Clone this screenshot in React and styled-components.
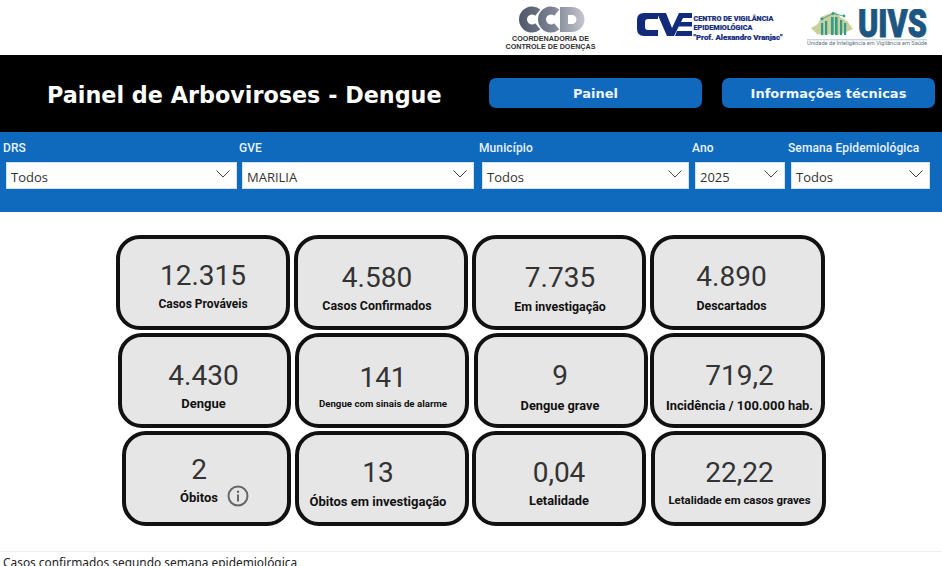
import React from 'react';
import styled, { createGlobalStyle } from 'styled-components';

const Global = createGlobalStyle`
  html, body { margin: 0; padding: 0; background: #fff; }
  body { width: 942px; height: 566px; overflow: hidden; font-family: Roboto, "Liberation Sans", sans-serif; }
`;

const Page = styled.div`
  width: 942px;
  height: 566px;
  overflow: hidden;
  display: flex;
  flex-direction: column;
  background: #fff;
`;

const LogoBar = styled.div`
  height: 55px;
  flex: none;
  display: flex;
  align-items: flex-start;
  padding-left: 505px;
  box-sizing: border-box;
`;

const LogoSvg = styled.svg`
  flex: none;
  display: block;
  margin-left: ${p => p.$ml || 0}px;
  margin-top: ${p => p.$mt || 0}px;
`;

const Header = styled.header`
  height: 77px;
  flex: none;
  background: #000;
  display: flex;
  align-items: center;
  box-sizing: border-box;
  padding-left: 47px;
`;

const Title = styled.h1`
  margin: 2px 0 0;
  width: 442px;
  flex: none;
  color: #fff;
  font: 700 22.3px "DejaVu Sans", Verdana, sans-serif;
  white-space: nowrap;
`;

const NavButton = styled.button`
  width: 213px;
  height: 30px;
  flex: none;
  margin: -1px ${p => p.$mr || 0}px 0 0;
  padding: 0;
  border: none;
  border-radius: 7px;
  background: #1069bd;
  color: #eef6ff;
  font: 700 13px "DejaVu Sans", Verdana, sans-serif;
`;

const FilterBar = styled.section`
  height: 80px;
  flex: none;
  background: #0f69bd;
  display: flex;
  box-sizing: border-box;
  padding: 9px 0 0 3px;
`;

const FilterGroup = styled.div`
  width: ${p => p.$w}px;
  flex: none;
`;

const FilterLabel = styled.div`
  height: 15px;
  color: #e8f3fd;
  font: 500 12px/15px Roboto, sans-serif;
  letter-spacing: 0.1px;
  white-space: nowrap;
`;

const Select = styled.div`
  box-sizing: border-box;
  width: ${p => p.$w}px;
  height: 27px;
  margin: 6px 0 0 3px;
  padding: 0 5px 0 4px;
  background: #fff;
  border: 1px solid #cfe3f5;
  display: flex;
  align-items: center;
  justify-content: space-between;
  color: #333;
  font: 400 13px "Open Sans", sans-serif;
`;

const SelectText = styled.span`
  padding-top: 2px;
`;

const Chevron = styled.svg`
  flex: none;
  margin: -3px 1px 0 0;
`;

const Board = styled.main`
  flex: none;
  height: 339px;
  box-sizing: border-box;
  padding-top: 23px;
  display: flex;
  flex-direction: column;
  gap: 3px;
`;

const Row = styled.div`
  display: flex;
  padding-left: ${p => p.$pl}px;
`;

const Card = styled.article`
  position: relative;
  box-sizing: border-box;
  flex: none;
  width: ${p => p.$w}px;
  height: 95px;
  margin-left: ${p => p.$ml}px;
  border: 4px solid #111;
  border-radius: 24px;
  background: #e6e6e6;
  padding: 0 ${p => Math.max(0, -2 * (p.$dx || 0))}px 0 ${p => Math.max(0, 2 * (p.$dx || 0))}px;
  display: flex;
  flex-direction: column;
  align-items: center;
`;

const Value = styled.div`
  margin-top: ${p => p.$top}px;
  height: 32px;
  font: 400 28px/32px Roboto, sans-serif;
  color: #333;
`;

const Label = styled.div`
  margin-top: ${p => p.$gap}px;
  height: 16px;
  font: 700 ${p => p.$fs}px/16px Roboto, sans-serif;
  color: #111;
  white-space: nowrap;
`;

const InfoBadge = styled.svg`
  position: absolute;
  left: 101px;
  top: 50px;
`;

const Footer = styled.footer`
  flex: 1;
  border-top: 1px solid #f1f1f1;
  padding: 2px 0 0 3px;
  font: 400 11.9px/16px "Noto Sans", sans-serif;
  color: #222;
  white-space: nowrap;
`;

const filters = [
  { label: 'DRS', value: 'Todos', w: 236, sw: 231 },
  { label: 'GVE', value: 'MARILIA', w: 240, sw: 232 },
  { label: 'Município', value: 'Todos', w: 213, sw: 207 },
  { label: 'Ano', value: '2025', w: 96, sw: 90 },
  { label: 'Semana Epidemiológica', value: 'Todos', w: 145, sw: 139 },
];

const rows = [
  { pl: 116, cards: [
    { v: '12.315', l: 'Casos Prováveis', fs: 12, w: 174, ml: 0, top: 21, gap: 4, dx: 0 },
    { v: '4.580', l: 'Casos Confirmados', fs: 12.4, w: 174, ml: 4, top: 23, gap: 4, dx: -4 },
    { v: '7.735', l: 'Em investigação', fs: 12.4, w: 174, ml: 4, top: 23, gap: 5, dx: 1 },
    { v: '4.890', l: 'Descartados', fs: 12.4, w: 175, ml: 4, top: 22, gap: 5, dx: -6 },
  ]},
  { pl: 118, cards: [
    { v: '4.430', l: 'Dengue', fs: 13, w: 173, ml: 0, top: 23, gap: 4, dx: -1 },
    { v: '141', l: 'Dengue com sinais de alarme', fs: 9.7, w: 174, ml: 4, top: 25, gap: 2, dx: 1 },
    { v: '9', l: 'Dengue grave', fs: 12.8, w: 174, ml: 5, top: 23, gap: 6, dx: -1 },
    { v: '719,2', l: 'Incidência / 100.000 hab.', fs: 12.9, w: 175, ml: 2, top: 23, gap: 6, dx: 2 },
  ]},
  { pl: 122, cards: [
    { v: '2', l: 'Óbitos', fs: 13, w: 169, ml: 0, top: 19, gap: 4, dx: -7.5, info: true },
    { v: '13', l: 'Óbitos em investigação', fs: 13, w: 174, ml: 4, top: 22, gap: 5, dx: -4 },
    { v: '0,04', l: 'Letalidade', fs: 12.8, w: 174, ml: 3, top: 22, gap: 4, dx: 0 },
    { v: '22,22', l: 'Letalidade em casos graves', fs: 11.4, w: 175, ml: 5, top: 22, gap: 3, dx: 1 },
  ]},
];

const CcdLogo = () => (
  <LogoSvg width="91" height="50" viewBox="0 0 91 50" $mt={3}>
    <defs>
      <linearGradient id="ccdG" gradientUnits="userSpaceOnUse" x1="14" y1="0" x2="80" y2="0">
        <stop offset="0" stopColor="#4f5768" />
        <stop offset="0.5" stopColor="#7b8192" />
        <stop offset="1" stopColor="#c6c8d0" />
      </linearGradient>
    </defs>
    <g fill="none" stroke="url(#ccdG)" strokeWidth="8">
      <path d="M32.8 9.6 A9 9 0 1 0 32.8 23.4" />
      <path d="M51.8 9.6 A9 9 0 1 0 51.8 23.4" />
      <path d="M59 8 H67 A8.5 8.5 0 0 1 67 25 H59 Z" />
    </g>
    <g fill="#303033" fontFamily="'Liberation Sans', sans-serif" fontWeight="700" fontSize="7.6" textAnchor="middle">
      <text x="45.5" y="37.5" textLength="77" lengthAdjust="spacingAndGlyphs">COORDENADORIA DE</text>
      <text x="45.5" y="45.5" textLength="90" lengthAdjust="spacingAndGlyphs">CONTROLE DE DOENÇAS</text>
    </g>
  </LogoSvg>
);

const CveLogo = () => (
  <LogoSvg width="148" height="32" viewBox="0 0 148 32" $ml={40} $mt={11}>
    <path d="M8 2 H22 V8 H12 Q9 8 9 11 V16 Q9 19 12 19 H22 V25 H8 Q1 25 1 18 V9 Q1 2 8 2 Z" fill="#122a7a" />
    <path d="M21 2 H30 L36 17 L43 2 H56 V7 H47 L38 25 H31 Z" fill="#122a7a" />
    <path d="M44.5 11 H56 V15.5 H42.5 Z M41 20 H56 V25 H39 Z" fill="#122a7a" />
    <g fill="#1a2f7e" stroke="#1a2f7e" strokeWidth="0.2" fontFamily="Roboto, sans-serif" fontWeight="900" fontSize="8">
      <text x="57.5" y="9.5" textLength="80" lengthAdjust="spacingAndGlyphs">CENTRO DE VIGILÂNCIA</text>
      <text x="57.5" y="18.5" textLength="59" lengthAdjust="spacingAndGlyphs">EPIDEMIOLÓGICA</text>
      <text x="57.5" y="28.5" textLength="89" lengthAdjust="spacingAndGlyphs">"Prof. Alexandro Vranjac"</text>
    </g>
  </LogoSvg>
);

const UivsLogo = () => (
  <LogoSvg width="123" height="40" viewBox="0 0 123 40" $ml={23} $mt={9}>
    <path d="M4 19 L11 15 L14 8 L21 5 L29 3 L33 8 L40 12 L46 20 L39 23 L31 26 L25 25 L16 26 L10 25 Z" fill="#cbd09b" />
    <g fill="#2f9c8e">
      <rect x="14" y="14" width="2.2" height="12" />
      <rect x="18" y="12" width="2.2" height="14" />
      <rect x="24" y="8" width="2.6" height="18" />
      <rect x="28" y="8" width="2.6" height="18" />
      <rect x="33" y="11" width="2.2" height="15" />
      <rect x="37" y="14" width="2.2" height="12" />
      <circle cx="15" cy="10" r="1.4" />
      <circle cx="26" cy="4.5" r="1.4" />
      <circle cx="37" cy="7" r="1.4" />
    </g>
    <path d="M15 10 L26 4.5 L37 7" fill="none" stroke="#2f9c8e" strokeWidth="0.8" />
    <text x="51" y="28" fill="#1d5680" stroke="#1d5680" strokeWidth="0.9" fontFamily="Roboto, sans-serif" fontWeight="900" fontSize="38" textLength="69" lengthAdjust="spacingAndGlyphs">UIVS</text>
    <rect x="0" y="30.5" width="120" height="0.7" fill="#8fa7b5" />
    <text x="0" y="36" fill="#5a7586" fontFamily="Roboto, sans-serif" fontSize="6" textLength="120" lengthAdjust="spacingAndGlyphs">Unidade de Inteligência em Vigilância em Saúde</text>
  </LogoSvg>
);

export default function App() {
  return (
    <Page>
      <Global />
      <LogoBar>
        <CcdLogo />
        <CveLogo />
        <UivsLogo />
      </LogoBar>
      <Header>
        <Title>Painel de Arboviroses - Dengue</Title>
        <NavButton $mr={20}>Painel</NavButton>
        <NavButton>Informações técnicas</NavButton>
      </Header>
      <FilterBar>
        {filters.map(f => (
          <FilterGroup key={f.label} $w={f.w}>
            <FilterLabel>{f.label}</FilterLabel>
            <Select $w={f.sw}>
              <SelectText>{f.value}</SelectText>
              <Chevron width="14" height="8" viewBox="0 0 14 8">
                <path d="M0.5 0.5 L7 7 L13.5 0.5" fill="none" stroke="#444" strokeWidth="1" />
              </Chevron>
            </Select>
          </FilterGroup>
        ))}
      </FilterBar>
      <Board>
        {rows.map(r => (
          <Row key={r.pl} $pl={r.pl}>
            {r.cards.map(c => (
              <Card key={c.l} $w={c.w} $ml={c.ml} $dx={c.dx}>
                <Value $top={c.top}>{c.v}</Value>
                <Label $gap={c.gap} $fs={c.fs}>{c.l}</Label>
                {c.info && (
                  <InfoBadge width="22" height="22" viewBox="0 0 22 22">
                    <circle cx="11" cy="11" r="9.5" fill="none" stroke="#666" strokeWidth="2" />
                    <circle cx="11" cy="6.8" r="1.2" fill="#666" />
                    <rect x="10" y="9.5" width="2" height="7" fill="#666" />
                  </InfoBadge>
                )}
              </Card>
            ))}
          </Row>
        ))}
      </Board>
      <Footer>Casos confirmados segundo semana epidemiológica</Footer>
    </Page>
  );
}
